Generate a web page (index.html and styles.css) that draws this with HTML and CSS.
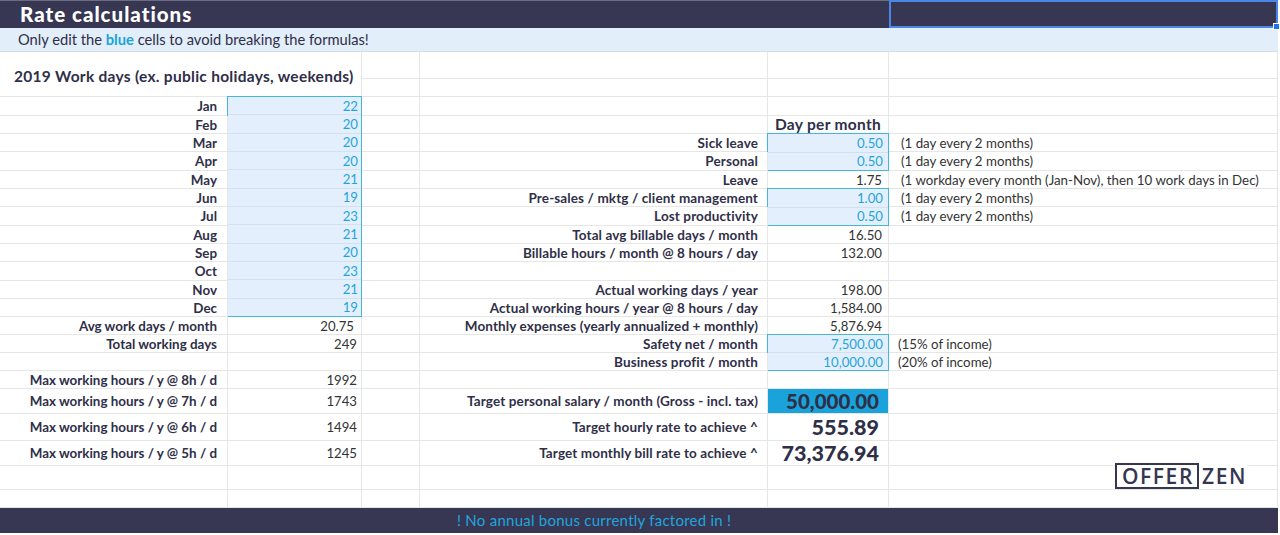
FILE: index.html
```html
<!DOCTYPE html>
<html>
<head>
<meta charset="utf-8">
<link rel="stylesheet" href="styles.css">
</head>
<body>
<div class="topbar">
  <div class="title">Rate calculations</div>
  <div class="sel"></div>
</div>
<div class="hint">Only edit the <b>blue</b> cells to avoid breaking the formulas!</div>
<div class="sheet">
  <div class="c heading">2019 Work days (ex. public holidays, weekends)</div>
  <div class="c"></div><div class="c"></div><div class="c"></div><div class="c"></div>
  <div class="c"></div><div class="c"></div><div class="c"></div><div class="c"></div>
  <div class="c l">Jan</div>
  <div class="grp grp12">
    <div class="gi">22</div><div class="gi">20</div><div class="gi">20</div><div class="gi">20</div>
    <div class="gi">21</div><div class="gi">19</div><div class="gi">23</div><div class="gi">21</div>
    <div class="gi">20</div><div class="gi">23</div><div class="gi">21</div><div class="gi">19</div>
  </div>
  <div class="c"></div><div class="c"></div><div class="c"></div><div class="c"></div>
  <div class="c l">Feb</div><div class="c"></div><div class="c"></div>
  <div class="c colhead">Day per month</div><div class="c"></div>
  <div class="c l">Mar</div><div class="c"></div>
  <div class="c l2">Sick leave</div>
  <div class="grp grp2"><div class="gi g2">0.50</div><div class="gi g2">0.50</div></div>
  <div class="c n">(1 day every 2 months)</div>
  <div class="c l">Apr</div><div class="c"></div>
  <div class="c l2">Personal</div>
  <div class="c n">(1 day every 2 months)</div>
  <div class="c l">May</div><div class="c"></div>
  <div class="c l2">Leave</div><div class="c v2">1.75</div>
  <div class="c n">(1 workday every month (Jan-Nov), then 10 work days in Dec)</div>
  <div class="c l">Jun</div><div class="c"></div>
  <div class="c l2">Pre-sales / mktg / client management</div>
  <div class="grp grp2"><div class="gi g2">1.00</div><div class="gi g2">0.50</div></div>
  <div class="c n">(1 day every 2 months)</div>
  <div class="c l">Jul</div><div class="c"></div>
  <div class="c l2">Lost productivity</div>
  <div class="c n">(1 day every 2 months)</div>
  <div class="c l">Aug</div><div class="c"></div>
  <div class="c l2">Total avg billable days / month</div><div class="c v2">16.50</div><div class="c"></div>
  <div class="c l">Sep</div><div class="c"></div>
  <div class="c l2">Billable hours / month @ 8 hours / day</div><div class="c v2">132.00</div><div class="c"></div>
  <div class="c l">Oct</div><div class="c"></div><div class="c"></div><div class="c"></div><div class="c"></div>
  <div class="c l">Nov</div><div class="c"></div>
  <div class="c l2">Actual working days / year</div><div class="c v2">198.00</div><div class="c"></div>
  <div class="c l">Dec</div><div class="c"></div>
  <div class="c l2">Actual working hours / year @ 8 hours / day</div><div class="c v2">1,584.00</div><div class="c"></div>
  <div class="c l">Avg work days / month</div><div class="c v v-avg">20.75</div><div class="c"></div>
  <div class="c l2">Monthly expenses (yearly annualized + monthly)</div><div class="c v2">5,876.94</div><div class="c"></div>
  <div class="c l">Total working days</div><div class="c v">249</div><div class="c"></div>
  <div class="c l2">Safety net / month</div>
  <div class="grp grp2"><div class="gi g2">7,500.00</div><div class="gi g2">10,000.00</div></div>
  <div class="c n n-tight">(15% of income)</div>
  <div class="c"></div><div class="c"></div><div class="c"></div>
  <div class="c l2">Business profit / month</div>
  <div class="c n n-tight">(20% of income)</div>
  <div class="c l">Max working hours / y @ 8h / d</div><div class="c v">1992</div>
  <div class="c"></div><div class="c"></div><div class="c"></div><div class="c"></div>
  <div class="c l">Max working hours / y @ 7h / d</div><div class="c v">1743</div><div class="c"></div>
  <div class="c l2">Target personal salary / month (Gross - incl. tax)</div>
  <div class="c v2 target">50,000.00</div><div class="c"></div>
  <div class="c l">Max working hours / y @ 6h / d</div><div class="c v">1494</div><div class="c"></div>
  <div class="c l2">Target hourly rate to achieve ^</div>
  <div class="c v2 big">555.89</div><div class="c"></div>
  <div class="c l">Max working hours / y @ 5h / d</div><div class="c v">1245</div><div class="c"></div>
  <div class="c l2">Target monthly bill rate to achieve ^</div>
  <div class="c v2 big">73,376.94</div><div class="c"></div>
  <div class="c"></div><div class="c"></div><div class="c"></div><div class="c"></div><div class="c"></div>
  <div class="c logo-cell">
    <div class="logo"><span class="offer">OFFER</span><span class="zen">ZEN</span></div>
  </div>
  <div class="c"></div><div class="c"></div><div class="c"></div><div class="c"></div><div class="c"></div><div class="c"></div>
</div>
<div class="footer">! No annual bonus currently factored in !</div>
</body>
</html>
```

FILE: styles.css
```css
html, body {
  margin: 0;
  padding: 0;
}
body {
  width: 1280px;
  height: 535px;
  overflow: hidden;
  background: #ffffff;
  font-family: "Lato", "Open Sans", sans-serif;
  color: #2f2f48;
}

.topbar {
  width: 1278px;
  height: 28px;
  display: grid;
  grid-template-columns: 889px 389px;
  background: #373753;
  border-top: 1px solid #6c6c80;
  box-sizing: border-box;
}
.title {
  color: #ffffff;
  font-weight: 900;
  font-size: 20.5px;
  letter-spacing: 1px;
  line-height: 27px;
  padding-left: 20px;
}
.sel {
  position: relative;
  box-sizing: border-box;
  border: 2px solid #4a86e8;
  margin-top: -1px;
}
.sel::after {
  content: "";
  position: absolute;
  right: -4px;
  bottom: -4px;
  width: 5px;
  height: 5px;
  background: #1a73e8;
  border: 1px solid #ffffff;
}

.hint {
  width: 1278px;
  height: 24px;
  box-sizing: border-box;
  background: #e2eefa;
  border-bottom: 1px solid #d5dce4;
  padding-left: 18px;
  font-size: 14.7px;
  line-height: 23px;
  color: #2f2f48;
}
.hint b {
  color: #1aa3da;
  font-weight: 700;
}

.sheet {
  width: 1278px;
  display: grid;
  grid-template-columns: 228px 134px 58px 348px 121px 389px;
  grid-template-rows: 27px 18px 19px 18px 18px 19px 18px 18px 19px 18px 18px 19px 18px 18px 18px 18px 18px 18px 25px 27px 25px 24px 18px;
}
.c {
  box-sizing: border-box;
  border-right: 1px solid #e6e6e6;
  border-bottom: 1px solid #e6e6e6;
  display: flex;
  align-items: center;
  justify-content: flex-end;
  font-size: 13px;
  white-space: nowrap;
  min-width: 0;
}
.heading {
  grid-column: span 2;
  grid-row: span 2;
  justify-content: flex-start;
  padding-left: 14px;
  padding-top: 3px;
  font-size: 15.5px;
  letter-spacing: 0.28px;
  font-weight: 700;
  color: #2f2f48;
}
.l,
.l2 {
  font-weight: 700;
  font-size: 13.5px;
}
.l {
  padding-right: 10px;
  font-size: 13.4px;
}
.l2 {
  padding-right: 9px;
  letter-spacing: 0.12px;
}
.v {
  padding-right: 4px;
  color: #333333;
  font-size: 13.2px;
}
.v-avg {
  padding-right: 7px;
}
.v2 {
  padding-right: 6px;
  color: #333333;
  font-size: 13.2px;
}
.colhead {
  font-weight: 700;
  font-size: 15.5px;
  letter-spacing: 0.3px;
  padding-right: 7px;
  align-items: flex-end;
}
.n {
  justify-content: flex-start;
  padding-left: 12px;
  color: #333333;
  font-size: 13.3px;
}
.n-tight {
  padding-left: 9px;
}

.grp {
  box-sizing: border-box;
  margin: -1px 0 0 -1px;
  border: 1px solid #45b5d9;
  background: #e3effc;
  display: flex;
  flex-direction: column;
}
.grp12 {
  grid-row: span 12;
}
.grp2 {
  grid-row: span 2;
}
.gi {
  flex: 1;
  display: flex;
  align-items: center;
  justify-content: flex-end;
  padding-right: 3px;
  font-size: 13.2px;
  color: #1fa5dc;
  border-bottom: 1px solid #d3e1ef;
}
.gi:last-child {
  border-bottom: none;
}
.g2 {
  padding-right: 5px;
}

.target {
  background: #1aa3da;
  font-weight: 900;
  font-size: 20.5px;
  color: #2f2f48;
  padding-right: 9px;
}
.big {
  font-weight: 900;
  font-size: 21.5px;
  color: #2f2f48;
  padding-right: 9px;
}

.logo-cell {
  padding-right: 30px;
  overflow: visible;
}
.logo {
  display: flex;
  align-items: center;
  gap: 3px;
  background: #ffffff;
  color: #363652;
  font-family: "Open Sans", "Lato", sans-serif;
  font-weight: 600;
  font-size: 21px;
  letter-spacing: 1.6px;
  line-height: 22px;
  position: relative;
  top: -2px;
}
.offer {
  border: 2px solid #363652;
  padding: 0 3px 0 5px;
}

.footer {
  width: 1278px;
  height: 25px;
  background: #373753;
  color: #1fa6dc;
  font-size: 15px;
  letter-spacing: 0.25px;
  line-height: 25px;
  padding-left: 457px;
  box-sizing: border-box;
}
```
